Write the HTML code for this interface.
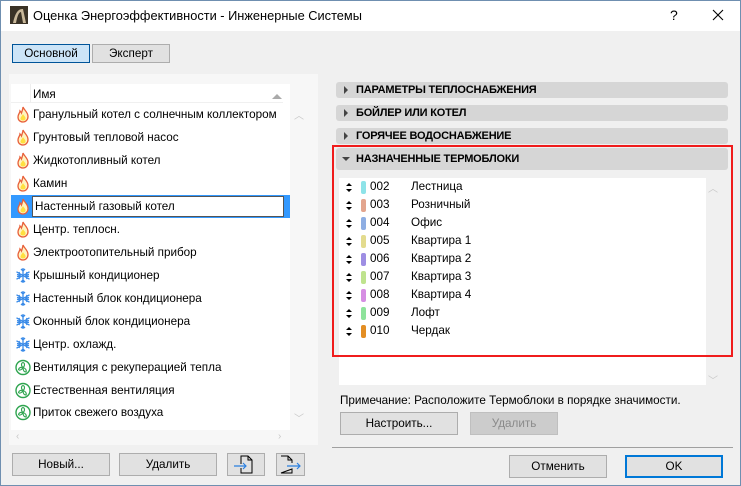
<!DOCTYPE html>
<html><head><meta charset="utf-8"><style>
*{box-sizing:border-box;margin:0;padding:0}
body{width:741px;height:486px;overflow:hidden;background:#f0f0f0;font-family:"Liberation Sans","DejaVu Sans",sans-serif;font-size:11.7px;color:#000;position:relative}
.a{position:absolute}
.win{position:absolute;left:0;top:0;width:741px;height:486px;border:1px solid #6f8fb0}
.title{left:1px;top:1px;width:739px;height:30px;background:#fff}
.btn{position:absolute;background:#e1e1e1;border:1px solid #adadad;text-align:center;font-size:11.7px;line-height:21px}
.row{position:absolute;left:11px;width:279px;height:23px;line-height:24px}
.row span{position:absolute;left:22px}
.ic{position:absolute;left:4px;top:3px;width:16px;height:17px}
.hd{position:absolute;left:336px;width:392px;height:16px;background:#d6d6d6;border-radius:3px;font-weight:bold;font-size:11px;line-height:16px;letter-spacing:-0.2px}
.hd span{position:absolute;left:20px}
.tri{position:absolute;left:8px;top:4px;width:0;height:0;border-top:4px solid transparent;border-bottom:4px solid transparent;border-left:4px solid #444}
.tr{position:absolute;left:339px;width:360px;height:18px;line-height:18px}
.tr .sw{position:absolute;left:22px;top:3px;width:5px;height:13px;border-radius:2px}
.tr .c{position:absolute;left:31px}
.tr .n{position:absolute;left:72px}
.chev{position:absolute;color:#c8c8c8;font-size:10px}
</style></head><body>
<div class="win"></div>
<div class="a title"></div>
<svg class="a" style="left:10px;top:6px" width="18" height="18"><rect width="18" height="18" fill="#3a3226"/><path d="M3 17 Q6 2 13 3 L16 17 L13 17 L11 6 Q8 6 6 17Z" fill="#c9b89a"/></svg>
<div class="a" style="left:33px;top:8px;font-size:12.8px">Оценка Энергоэффективности - Инженерные Системы</div>
<div class="a" style="left:670px;top:7px;font-size:14px">?</div>
<svg class="a" style="left:712px;top:9px" width="12" height="12"><path d="M1 1L11 11M11 1L1 11" stroke="#000" stroke-width="1.1"/></svg>

<div class="btn" style="left:12px;top:44px;width:78px;height:19px;line-height:17px;background:#cce4f7;border-color:#005499">Основной</div>
<div class="btn" style="left:92px;top:44px;width:78px;height:19px;line-height:17px">Эксперт</div>

<div class="a" style="left:9px;top:74px;width:309px;height:371px;background:#f7f7f7"></div>
<div class="a" style="left:11px;top:84px;width:279px;height:346px;background:#fff"></div>
<div class="a" style="left:11px;top:84px;width:272px;height:19px;background:#fff;border-bottom:1px solid #f0f0f0"></div>
<div class="a" style="left:30px;top:84px;width:1px;height:19px;background:#eee"></div>
<div class="a" style="left:33px;top:88px">Имя</div>
<div class="a" style="left:272px;top:94px;width:0;height:0;border-left:5px solid transparent;border-right:5px solid transparent;border-bottom:5px solid #aaa"></div>
<div class="chev" style="left:294px;top:107px">︿</div>
<div class="chev" style="left:294px;top:410px">﹀</div>
<div class="chev" style="left:16px;top:431px">‹</div>
<div class="chev" style="left:278px;top:431px">›</div>

<svg width="0" height="0" style="position:absolute"><defs>
<g id="fl"><path d="M8 1 C9 4 13 6 13 10.5 C13 14 10.5 16 8 16 C5 16 3 14 3 11 C3 8 5 7 5 5 C6 6 6.5 7 6.5 7 C7 5 8 3 8 1Z" fill="#fff3c0" stroke="#e8603a" stroke-width="1.3"/><path d="M8 8 C9 10 11 11 10.5 13 C10 15 6 15 5.5 13 C5.5 11 7 10 8 8Z" fill="#ffe040"/></g>
<g id="sn" stroke="#3a8be8" stroke-width="1.3" fill="none"><path d="M8 1V16M1.5 4.8L14.5 12.2M14.5 4.8L1.5 12.2M6 2l2 2 2-2M6 15l2-2 2 2M2 7.5l3 .5-1-3M14 7.5l-3 .5 1-3M2 9.5l3-.5-1 3M14 9.5l-3-.5 1 3"/></g>
<g id="fn"><circle cx="8" cy="8.5" r="7" fill="#fff" stroke="#2ea44f" stroke-width="1.4"/><path d="M8 8.5C6 7 6 4 8 3.5C10 4 10 7 8 8.5ZM8 8.5C10 9 12 11 11 13C9 13 8 11 8 8.5ZM8 8.5C7 10.5 4.5 12 3.5 10.5C4 8.5 6 8 8 8.5Z" fill="none" stroke="#2ea44f" stroke-width="1.1"/></g>
</defs></svg>

<div class="row" style="top:103px"><svg class="ic"><use href="#fl"/></svg><span>Гранульный котел с солнечным коллектором</span></div>
<div class="row" style="top:126px"><svg class="ic"><use href="#fl"/></svg><span>Грунтовый тепловой насос</span></div>
<div class="row" style="top:149px"><svg class="ic"><use href="#fl"/></svg><span>Жидкотопливный котел</span></div>
<div class="row" style="top:172px"><svg class="ic"><use href="#fl"/></svg><span>Камин</span></div>
<div class="row" style="top:195px;background:#3399ff"><svg class="ic"><use href="#fl"/></svg><div class="a" style="left:21px;top:1px;width:252px;height:21px;background:#fff;border:1px solid #555"></div><span style="left:24px">Настенный газовый котел</span></div>
<div class="row" style="top:218px"><svg class="ic"><use href="#fl"/></svg><span>Центр. теплосн.</span></div>
<div class="row" style="top:241px"><svg class="ic"><use href="#fl"/></svg><span>Электроотопительный прибор</span></div>
<div class="row" style="top:264px"><svg class="ic"><use href="#sn"/></svg><span>Крышный кондиционер</span></div>
<div class="row" style="top:287px"><svg class="ic"><use href="#sn"/></svg><span>Настенный блок кондиционера</span></div>
<div class="row" style="top:310px"><svg class="ic"><use href="#sn"/></svg><span>Оконный блок кондиционера</span></div>
<div class="row" style="top:333px"><svg class="ic"><use href="#sn"/></svg><span>Центр. охлажд.</span></div>
<div class="row" style="top:356px"><svg class="ic"><use href="#fn"/></svg><span>Вентиляция с рекуперацией тепла</span></div>
<div class="row" style="top:379px"><svg class="ic"><use href="#fn"/></svg><span>Естественная вентиляция</span></div>
<div class="row" style="top:401px"><svg class="ic"><use href="#fn"/></svg><span>Приток свежего воздуха</span></div>

<div class="btn" style="left:12px;top:453px;width:98px;height:23px">Новый...</div>
<div class="btn" style="left:119px;top:453px;width:98px;height:23px">Удалить</div>
<div class="btn" style="left:227px;top:453px;width:38px;height:23px"><svg width="36" height="21" style="display:block"><path d="M13 10V2H20L24 6V19H13V14" fill="none" stroke="#000"/><path d="M20 2V6H24" fill="none" stroke="#000"/><path d="M6 12H18M15 9l3 3-3 3" fill="none" stroke="#2a7fe0" stroke-width="1.2"/></svg></div>
<div class="btn" style="left:276px;top:453px;width:29px;height:23px"><svg width="27" height="21" style="display:block"><path d="M4 2H11L15 6V9M15 15V19H4Z" fill="none" stroke="#000"/><path d="M11 2V6H15" fill="none" stroke="#000"/><path d="M10 12H23M20 9l3 3-3 3" fill="none" stroke="#2a7fe0" stroke-width="1.2"/></svg></div>

<div class="hd" style="top:82px"><div class="tri"></div><span>ПАРАМЕТРЫ ТЕПЛОСНАБЖЕНИЯ</span></div>
<div class="hd" style="top:105px"><div class="tri"></div><span>БОЙЛЕР ИЛИ КОТЕЛ</span></div>
<div class="hd" style="top:128px"><div class="tri"></div><span>ГОРЯЧЕЕ ВОДОСНАБЖЕНИЕ</span></div>
<div class="hd" style="top:148px;height:22px;line-height:22px"><div class="a" style="left:6px;top:9px;border-left:4px solid transparent;border-right:4px solid transparent;border-top:4px solid #444"></div><span>НАЗНАЧЕННЫЕ ТЕРМОБЛОКИ</span></div>
<div class="a" style="left:339px;top:178px;width:367px;height:207px;background:#fff"></div>
<div class="chev" style="left:708px;top:180px">︿</div>
<div class="chev" style="left:708px;top:372px">﹀</div>
<div class="a" style="left:332px;top:145px;width:401px;height:212px;border:2px solid #f01c1c"></div>

<div class="tr" style="top:178px"><div class="sw" style="background:#8ee3e8"></div><span class="c">002</span><span class="n">Лестница</span></div>
<div class="tr" style="top:196px"><div class="sw" style="background:#e3a58e"></div><span class="c">003</span><span class="n">Розничный</span></div>
<div class="tr" style="top:214px"><div class="sw" style="background:#8eaee3"></div><span class="c">004</span><span class="n">Офис</span></div>
<div class="tr" style="top:232px"><div class="sw" style="background:#e3db8e"></div><span class="c">005</span><span class="n">Квартира 1</span></div>
<div class="tr" style="top:250px"><div class="sw" style="background:#9e8ee3"></div><span class="c">006</span><span class="n">Квартира 2</span></div>
<div class="tr" style="top:268px"><div class="sw" style="background:#bfe38e"></div><span class="c">007</span><span class="n">Квартира 3</span></div>
<div class="tr" style="top:286px"><div class="sw" style="background:#d68ee3"></div><span class="c">008</span><span class="n">Квартира 4</span></div>
<div class="tr" style="top:304px"><div class="sw" style="background:#8ee39b"></div><span class="c">009</span><span class="n">Лофт</span></div>
<div class="tr" style="top:322px"><div class="sw" style="background:#e38e24"></div><span class="c">010</span><span class="n">Чердак</span></div>
<svg class="a" style="left:345px;top:182px" width="8" height="160">
<g fill="#000"><path id="ud" d="M1 4L4 1L7 4ZM1 7L4 10L7 7Z"/></g>
<use href="#ud" y="18"/><use href="#ud" y="36"/><use href="#ud" y="54"/><use href="#ud" y="72"/><use href="#ud" y="90"/><use href="#ud" y="108"/><use href="#ud" y="126"/><use href="#ud" y="144"/>
</svg>

<div class="a" style="left:340px;top:394px">Примечание: Расположите Термоблоки в порядке значимости.</div>
<div class="btn" style="left:340px;top:412px;width:118px;height:23px">Настроить...</div>
<div class="btn" style="left:470px;top:412px;width:88px;height:23px;background:#cccccc;border-color:#bfbfbf;color:#8a8a8a">Удалить</div>
<div class="a" style="left:332px;top:447px;width:401px;height:1px;background:#a0a0a0"></div>
<div class="btn" style="left:509px;top:455px;width:98px;height:23px">Отменить</div>
<div class="btn" style="left:625px;top:455px;width:98px;height:23px;border:2px solid #0078d7;line-height:19px">OK</div>
</body></html>
